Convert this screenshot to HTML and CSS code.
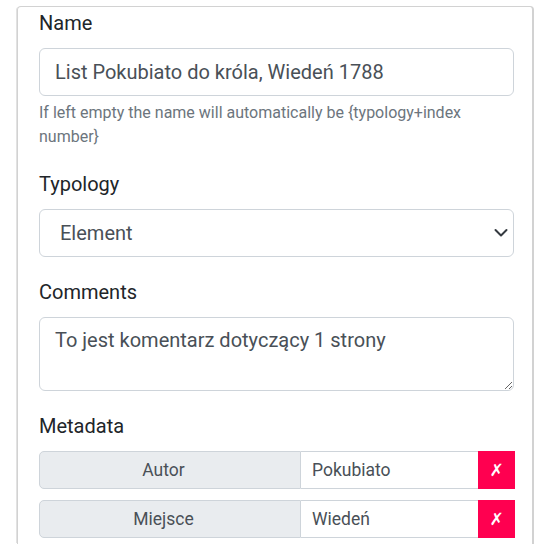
FILE: index.html
```html
<!DOCTYPE html>
<html lang="pl">
<head>
<meta charset="utf-8">
<title>Form</title>
<link rel="stylesheet" href="styles.css">
</head>
<body>
<div class="card">
  <div class="card-body">
    <div class="group">
      <label class="label">Name</label>
      <div class="control">List Pokubiato do króla, Wiedeń 1788</div>
      <div class="help">If left empty the name will automatically be {typology+index number}</div>
    </div>
    <div class="group">
      <label class="label">Typology</label>
      <div class="control select">Element
        <svg class="chev" width="14" height="10" viewBox="0 0 14 10"><path d="M1.5 2 L7 7.5 L12.5 2" fill="none" stroke="#343a40" stroke-width="2" stroke-linecap="round" stroke-linejoin="round"/></svg>
      </div>
    </div>
    <div class="group">
      <label class="label">Comments</label>
      <textarea class="control area">To jest komentarz dotyczący 1 strony</textarea>
    </div>
    <div class="group last">
      <label class="label">Metadata</label>
      <div class="meta-row">
        <div class="meta-key">Autor</div>
        <div class="meta-val">Pokubiato</div>
        <div class="meta-del">✗</div>
      </div>
      <div class="meta-row">
        <div class="meta-key">Miejsce</div>
        <div class="meta-val">Wiedeń</div>
        <div class="meta-del">✗</div>
      </div>
    </div>
  </div>
</div>
</body>
</html>
```
FILE: styles.css
```css
html, body {
  margin: 0;
  padding: 0;
  background: #fff;
}
body {
  font-family: Roboto, "Liberation Sans", sans-serif;
  color: #212529;
  height: 544px;
  overflow: hidden;
}
.card {
  box-sizing: border-box;
  margin: 6px 0 0 17px;
  width: 517px;
  height: 538px;
  border: 1px solid #d2d2d2;
  border-right: 2px solid #d2d2d2;
  border-bottom: none;
  border-radius: 4px 4px 0 0;
  box-shadow: -2px 0 0 -1px #e2e2e2;
}
.card-body {
  padding: 1px 18px 0 21px;
}
.group {
  margin-bottom: 20px;
}
.group.last {
  margin-bottom: 0;
}
.label {
  display: block;
  font-size: 20px;
  line-height: 30px;
  margin-bottom: 10px;
  color: #212529;
}
.control {
  box-sizing: border-box;
  display: block;
  width: 475px;
  height: 48px;
  border: 1px solid #ced4da;
  border-radius: 6px;
  padding: 8px 15px;
  font-family: Roboto, "Liberation Sans", sans-serif;
  font-size: 20px;
  line-height: 30px;
  color: #495057;
  background: #fff;
}
.help {
  margin-top: 5px;
  font-size: 16px;
  line-height: 24px;
  color: #6c757d;
}
.select {
  position: relative;
  padding-left: 20px;
}
.chev {
  position: absolute;
  right: 5px;
  top: 18px;
}
.area {
  height: 74px;
  padding: 7px 15px;
  resize: vertical;
  margin: 0;
}
.meta-row {
  display: flex;
  width: 476px;
  height: 38px;
  margin-bottom: 11px;
  font-size: 17.5px;
  line-height: 26px;
  color: #495057;
}
.meta-row:last-child {
  margin-bottom: 0;
}
.meta-key {
  box-sizing: border-box;
  width: 262px;
  background: #e9ecef;
  border: 1px solid #ced4da;
  border-radius: 5px 0 0 5px;
  text-align: center;
  padding: 5px 13px 0 0;
}
.meta-val {
  box-sizing: border-box;
  width: 177px;
  border-top: 1px solid #ced4da;
  border-bottom: 1px solid #ced4da;
  padding: 5px 0 0 11px;
}
.meta-del {
  width: 37px;
  background: #ff0050;
  color: #fff;
  font-family: "DejaVu Sans", sans-serif;
  font-weight: bold;
  font-size: 17px;
  display: flex;
  align-items: center;
  justify-content: center;
}
```
